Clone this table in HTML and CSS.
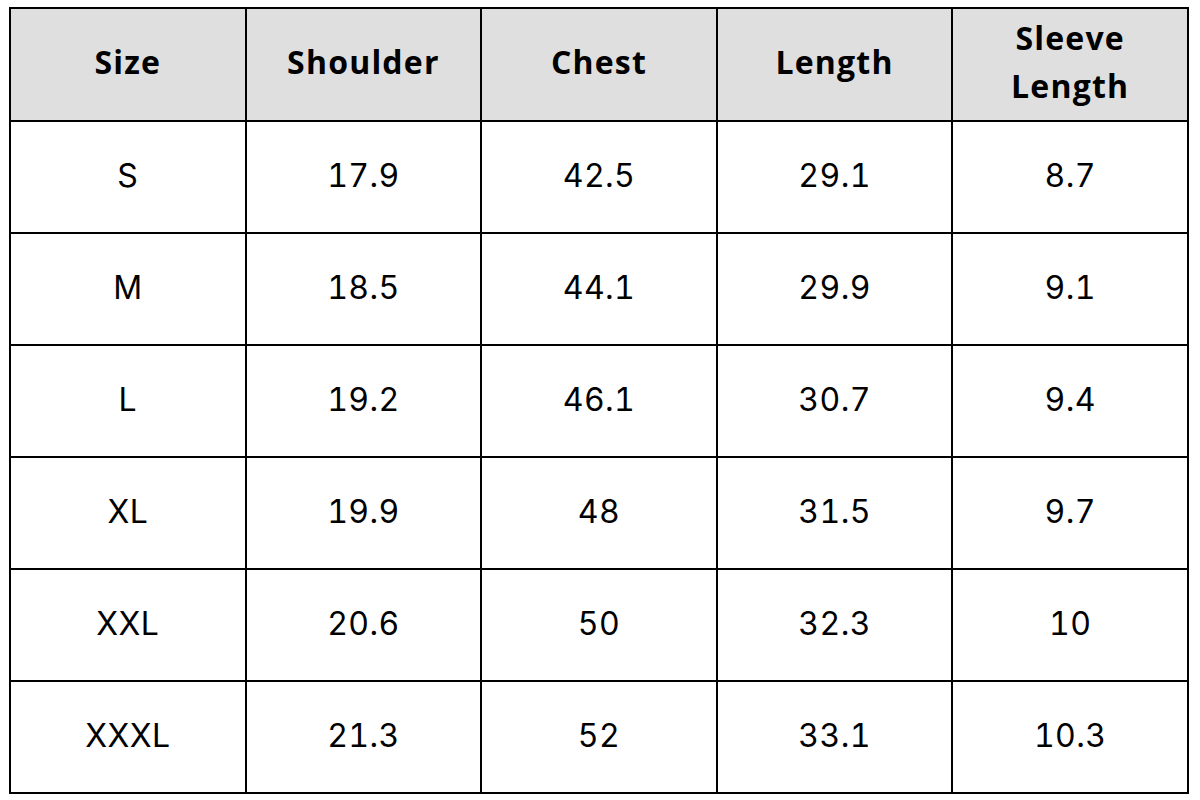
FILE: index.html
```html
<!DOCTYPE html>
<html>
<head>
<meta charset="utf-8">
<link rel="stylesheet" href="styles.css">
</head>
<body>
<table class="size-table">
  <thead>
    <tr><th>Size</th><th>Shoulder</th><th>Chest</th><th>Length</th><th>Sleeve<br>Length</th></tr>
  </thead>
  <tbody>
    <tr><td>S</td><td>17.9</td><td>42.5</td><td>29.1</td><td>8.7</td></tr>
    <tr><td>M</td><td>18.5</td><td>44.1</td><td>29.9</td><td>9.1</td></tr>
    <tr><td>L</td><td>19.2</td><td>46.1</td><td>30.7</td><td>9.4</td></tr>
    <tr><td>XL</td><td>19.9</td><td>48</td><td>31.5</td><td>9.7</td></tr>
    <tr><td>XXL</td><td>20.6</td><td>50</td><td>32.3</td><td>10</td></tr>
    <tr><td>XXXL</td><td>21.3</td><td>52</td><td>33.1</td><td>10.3</td></tr>
  </tbody>
</table>
</body>
</html>
```
FILE: styles.css
```css
html, body {
  margin: 0;
  padding: 0;
  background: #ffffff;
}
body {
  padding: 7px 0 0 9px;
}
.size-table {
  border-collapse: collapse;
  table-layout: fixed;
  width: 1180px;
  font-family: Inter, "Liberation Sans", sans-serif;
  color: #000;
}
.size-table th,
.size-table td {
  border: 2px solid #000;
  text-align: center;
  vertical-align: middle;
  padding: 0;
}
.size-table th {
  background: #dfdfdf;
  height: 105px;
  padding-bottom: 6px;
  font-family: "Open Sans", "Liberation Sans", sans-serif;
  font-weight: 700;
  font-size: 32px;
  letter-spacing: 1.2px;
  line-height: 48px;
}
.size-table td {
  height: 106px;
  padding-bottom: 4px;
  font-size: 32px;
  font-weight: 400;
  letter-spacing: 0.4px;
  font-variant-numeric: tabular-nums;
}
```
